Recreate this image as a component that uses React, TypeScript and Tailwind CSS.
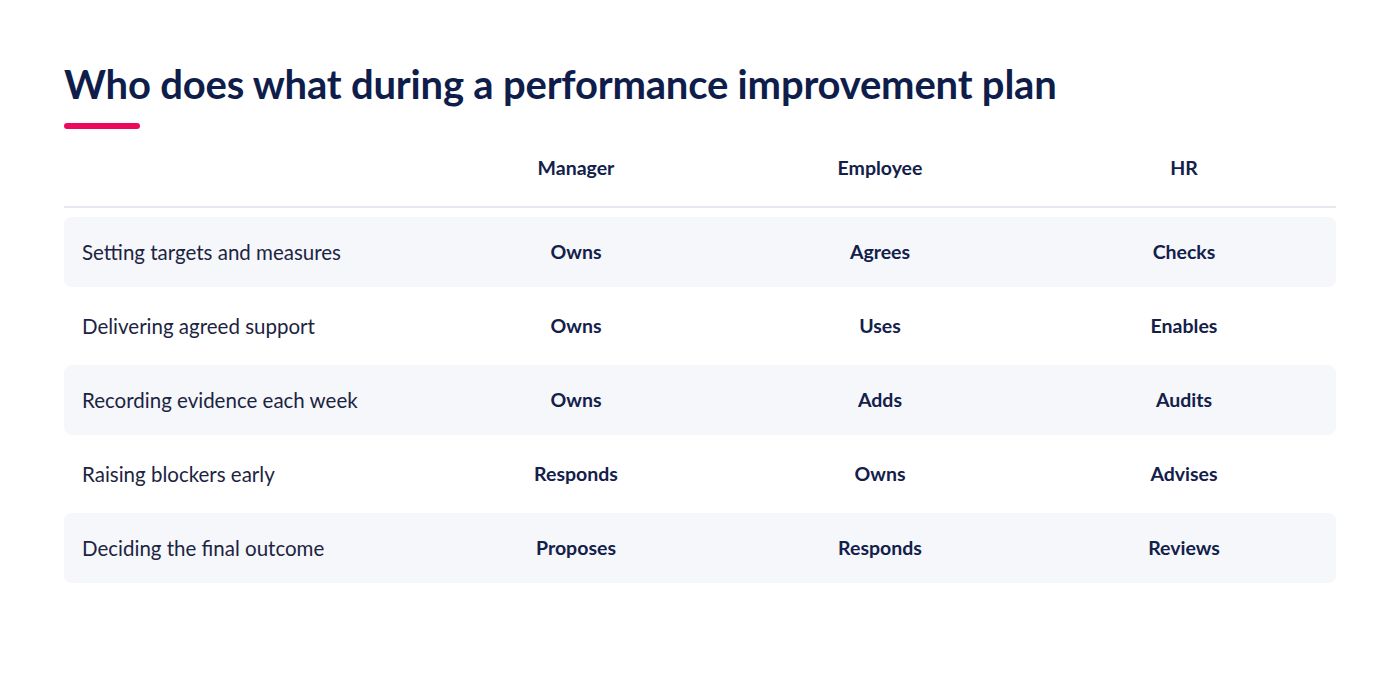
const columns = ["Manager", "Employee", "HR"];

const rows = [
  { task: "Setting targets and measures", values: ["Owns", "Agrees", "Checks"] },
  { task: "Delivering agreed support", values: ["Owns", "Uses", "Enables"] },
  { task: "Recording evidence each week", values: ["Owns", "Adds", "Audits"] },
  { task: "Raising blockers early", values: ["Responds", "Owns", "Advises"] },
  { task: "Deciding the final outcome", values: ["Proposes", "Responds", "Reviews"] },
];

export default function App() {
  return (
    <div
      className="min-h-[700px] w-full bg-white px-16 pt-[60px]"
      style={{ fontFamily: "Lato, 'Liberation Sans', sans-serif" }}
    >
      <h1 className="text-[40px] font-bold leading-[48px] tracking-[-0.2px] text-[#0f1d4b]">
        Who does what during a performance improvement plan
      </h1>
      <div className="mt-[15px] h-1.5 w-[76px] rounded-full bg-[#ec0a5f]" />

      {/* Header */}
      <div className="mt-[5px] grid h-[74px] grid-cols-[360px_1fr_1fr_1fr] items-center border-b-2 border-[#e6e8ef] pb-1">
        <div />
        {columns.map((c) => (
          <div key={c} className="text-center text-[19.5px] font-bold text-[#13204a]">
            {c}
          </div>
        ))}
      </div>

      {/* Rows */}
      <div className="mt-[9px] flex flex-col gap-1">
        {rows.map((r, i) => (
          <div
            key={r.task}
            className={`grid h-[70px] grid-cols-[360px_1fr_1fr_1fr] items-center rounded-lg ${
              i % 2 === 0 ? "bg-[#f5f7fb]" : "bg-white"
            }`}
          >
            <div className="pl-[18px] text-[20.5px] text-[#1c2442]">{r.task}</div>
            {r.values.map((v, j) => (
              <div key={j} className="text-center text-[19.5px] font-bold text-[#13204a]">
                {v}
              </div>
            ))}
          </div>
        ))}
      </div>
    </div>
  );
}
